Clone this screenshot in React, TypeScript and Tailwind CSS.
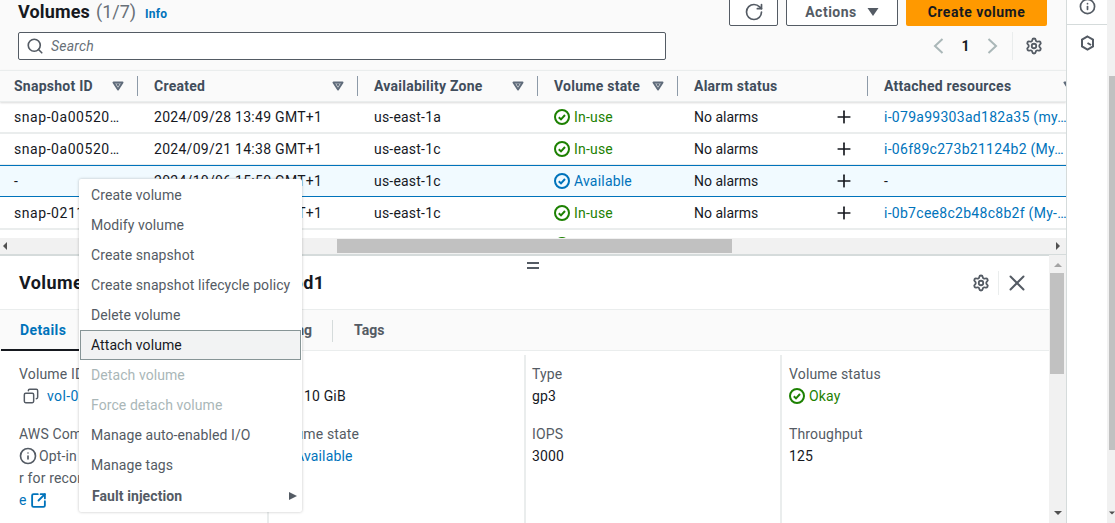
import React from "react";
import { RotateCw, Search, Settings, X, Plus, Copy, Info, SquareArrowOutUpRight } from "lucide-react";

const Tri = ({ c = "text-[#5f6b7a]" }: { c?: string }) => (
  <svg width="12" height="10" viewBox="0 0 12 10" className={`${c} shrink-0`}>
    <path d="M1.5 1.5h9L6 8.5z" fill="none" stroke="currentColor" strokeWidth="2" strokeLinejoin="round" />
    <path d="M4 2.5h4L6 6z" fill="currentColor" />
  </svg>
);

const Status = ({ color }: { color: string }) => (
  <svg width="16" height="16" viewBox="0 0 16 16" className={`${color} shrink-0`}>
    <circle cx="8" cy="8" r="7" fill="none" stroke="currentColor" strokeWidth="2" />
    <path d="M4.8 8.2l2.2 2.2 4-4.4" fill="none" stroke="currentColor" strokeWidth="2" />
  </svg>
);

const Chevron = ({ d }: { d: "l" | "r" }) => (
  <svg width="11" height="16" viewBox="0 0 11 16" className="text-[#aab7b8]">
    <path d={d === "l" ? "M9.5 1L2 8l7.5 7" : "M1.5 1L9 8l-7.5 7"} fill="none" stroke="currentColor" strokeWidth="2" />
  </svg>
);

const widths = ["w-[138px]", "w-[220px]", "w-[180px]", "w-[140px]", "w-[190px]", "w-[221px]"];

const Head = ({ label, w, filter = true, divider = true, first = false }: { label: string; w: string; filter?: boolean; divider?: boolean; first?: boolean }) => (
  <div className={`${w} shrink-0 h-full flex items-center justify-between relative pr-[14px] ${first ? "pl-[14px]" : "pl-[16px]"}`}>
    <span className="font-bold text-[#414d5c] whitespace-nowrap tracking-[0.25px]">{label}</span>
    {filter && <Tri />}
    {divider && <span className="absolute right-0 top-[5px] h-[20px] w-px bg-[#8d9aa8]" />}
  </div>
);

const rows = [
  { s: "snap-0a00520…", c: "2024/09/28 13:49 GMT+1", z: "us-east-1a", st: "In-use", r: "i-079a99303ad182a35 (my…" },
  { s: "snap-0a00520…", c: "2024/09/21 14:38 GMT+1", z: "us-east-1c", st: "In-use", r: "i-06f89c273b21124b2 (My…" },
  { s: "-", c: "2024/10/06 15:50 GMT+1", z: "us-east-1c", st: "Available", r: "-" },
  { s: "snap-0211a00e5…", c: "2024/09/14 10:12 GMT+1", z: "us-east-1c", st: "In-use", r: "i-0b7cee8c2b48c8b2f (My-…" },
];

const Row = ({ s, c, z, st, r }: { s: string; c: string; z: string; st: string; r: string }) => {
  const sel = st === "Available";
  return (
    <div className={`h-[32px] shrink-0 flex items-center whitespace-nowrap text-[#16191f] ${sel ? "bg-[#f1faff] border-y border-[#0073bb] -mt-px mb-px relative" : "border-b-2 border-[#eaeded]"}`}>
      <div className={`${widths[0]} shrink-0 pl-[14px] overflow-hidden tracking-[0.55px]`}>{s}</div>
      <div className={`${widths[1]} shrink-0 pl-[16px] tracking-[0.28px]`}>{c}</div>
      <div className={`${widths[2]} shrink-0 pl-[16px] tracking-[0.2px]`}>{z}</div>
      <div className={`${widths[3]} shrink-0 pl-[16px] flex items-center gap-[4px] tracking-[0.2px] ${sel ? "text-[#0073bb]" : "text-[#1d8102]"}`}>
        <Status color={sel ? "text-[#0073bb]" : "text-[#1d8102]"} />
        {st}
      </div>
      <div className={`${widths[4]} shrink-0 pl-[16px] flex items-center justify-between pr-[14px]`}>
        No alarms
        <Plus size={20} strokeWidth={2} className="text-[#16191f]" />
      </div>
      <div className={`flex-1 pl-[16px] overflow-hidden tracking-[0.28px] ${r === "-" ? "" : "text-[#0073bb]"}`}>{r}</div>
    </div>
  );
};

const menu = [
  "Create volume", "Modify volume", "Create snapshot", "Create snapshot lifecycle policy", "Delete volume",
  "Attach volume", "Detach volume", "Force detach volume", "Manage auto-enabled I/O", "Manage tags",
];

const Menu = () => (
  <div className="absolute left-[79px] top-[179px] w-[223px] h-[333px] bg-white rounded-[2px] shadow-[0_0_3px_rgba(0,0,0,0.25)] z-20 text-[#545b64] p-px tracking-[0.08px]">
    {menu.map((m) => {
      const hi = m === "Attach volume";
      const dis = m.startsWith("Detach") || m.startsWith("Force");
      return (
        <div key={m} className={`h-[30px] flex items-center whitespace-nowrap ${hi ? "bg-[#f2f3f3] border border-[#879596] text-[#16191f] pl-[10px]" : "pl-[11px]"} ${dis ? "text-[#aab7b8]" : ""}`}>
          {m}
        </div>
      );
    })}
    <div className="h-[30px] mt-px flex items-center justify-between pl-[12px] pr-[3px] font-bold">
      Fault injection
      <svg width="9" height="8" viewBox="0 0 9 8"><path d="M0 0l8 4-8 4z" fill="#545b64" /></svg>
    </div>
  </div>
);

const Field = ({ label, children }: { label: string; children: React.ReactNode }) => (
  <div className="mb-[16px]">
    <div className="text-[#545b64] h-[22px] leading-[22px] whitespace-nowrap">{label}</div>
    <div className="text-[#16191f] h-[22px] leading-[22px] flex items-center whitespace-nowrap">{children}</div>
  </div>
);

const ScrollBtn = ({ d, c = "#505050" }: { d: "l" | "r" | "u" | "d"; c?: string }) => {
  const p = { l: "M6 0L2 4l4 4z", r: "M2 0l4 4-4 4z", u: "M0 6l4-4 4 4z", d: "M0 2l4 4 4-4z" }[d];
  return <svg width="8" height="8" viewBox="0 0 8 8"><path d={p} fill={c} /></svg>;
};

export default function App() {
  return (
    <div className="relative w-[1115px] h-[523px] overflow-hidden bg-white flex text-[14px] font-['Roboto',sans-serif]">
      <div className="w-[1066px] shrink-0 flex flex-col h-full">
        {/* table section */}
        <div className="h-[255px] shrink-0 flex flex-col overflow-hidden">
          <div className="h-[70px] shrink-0 bg-[#fafafa] flex flex-col">
            <div className="h-[26px] flex items-start justify-between pl-[18px] pr-[19px]">
              <div className="flex items-baseline -mt-[2px] whitespace-nowrap">
                <span className="text-[18px] font-bold text-[#16191f] tracking-[0.15px]">Volumes</span>
                <span className="text-[18px] text-[#687078] ml-[6px]">(1/7)</span>
                <span className="text-[12px] font-bold text-[#0073bb] ml-[9px] tracking-[0.2px]">Info</span>
              </div>
              <div className="flex items-start gap-[8px] -mt-[8px]">
                <button className="w-[49px] h-[34px] pt-[6px] bg-white border border-[#545b64] rounded-[2px] flex items-center justify-center text-[#545b64]">
                  <RotateCw size={20} strokeWidth={2} />
                </button>
                <button className="w-[112px] h-[34px] pt-[6px] bg-white border border-[#545b64] rounded-[2px] flex items-center justify-center gap-[10px] font-bold text-[#545b64] tracking-[0.5px]">
                  Actions
                  <svg width="12" height="8" viewBox="0 0 12 8"><path d="M0.5 0h11L6 8z" fill="#545b64" /></svg>
                </button>
                <button className="w-[141px] h-[34px] pt-[6px] bg-[#ff9900] rounded-[2px] font-bold text-[#16191f] tracking-[0.5px]">Create volume</button>
              </div>
            </div>
            <div className="flex items-center justify-between pl-[18px] pr-[23px] mt-[6px]">
              <div className="w-[648px] h-[28px] bg-white border border-[#545b64] rounded-[2px] flex items-center pl-[7px] gap-[7px]">
                <Search size={18} strokeWidth={2.2} className="text-[#545b64]" />
                <span className="italic text-[#687078] tracking-[0.2px]">Search</span>
              </div>
              <div className="flex items-center h-[28px]">
                <Chevron d="l" />
                <span className="w-[43px] text-center font-bold text-[#16191f]">1</span>
                <Chevron d="r" />
                <span className="w-px h-[28px] bg-[#eaeded] ml-[14px] mr-[12px]" />
                <Settings size={18} strokeWidth={2.4} className="text-[#545b64]" />
              </div>
            </div>
          </div>
          <div className="h-[32px] shrink-0 bg-[#fafafa] border-y border-[#eaeded] flex items-center shadow-[0_1px_2px_rgba(0,0,0,0.15)] relative z-10 overflow-hidden">
            <Head label="Snapshot ID" w={widths[0]} first />
            <Head label="Created" w={widths[1]} />
            <Head label="Availability Zone" w={widths[2]} />
            <Head label="Volume state" w={widths[3]} />
            <Head label="Alarm status" w={widths[4]} filter={false} />
            <Head label="Attached resources" w={widths[5]} divider={false} />
          </div>
          <div className="flex-1 overflow-hidden flex flex-col min-h-0">
            {rows.map((r) => <Row key={r.c} {...r} />)}
            <div className="pl-[554px] pt-[7px]"><Status color="text-[#1d8102]" /></div>
          </div>
          <div className="h-[17px] shrink-0 bg-[#f1f1f1] flex items-center justify-between pl-[1px] pr-[4px] border-b border-[#d5dbdb] relative">
            <ScrollBtn d="l" />
            <div className="absolute left-[337px] w-[395px] top-0 h-[14px] mt-[1px] bg-[#c1c1c1]" />
            <ScrollBtn d="r" />
          </div>
        </div>
        {/* split panel */}
        <div className="flex-1 flex min-h-0">
          <div className="flex-1 flex flex-col min-w-0 relative border-t border-[#d5dbdb]">
            <div className="absolute left-[527px] top-[6px] w-[12px] h-[7px] border-y-2 border-[#545b64]" />
            <div className="h-[54px] shrink-0 border-b border-[#eaeded] flex items-center justify-between pl-[19px] pr-[19px]">
              <span className="text-[18px] font-bold text-[#16191f] whitespace-nowrap tracking-[0.4px]">Volume ID: vol-0a4b7c92e15f386d1</span>
              <div className="flex items-center">
                <Settings size={18} strokeWidth={2.4} className="text-[#545b64]" />
                <span className="w-px h-[24px] bg-[#eaeded] ml-[8px] mr-[5px]" />
                <X size={26} strokeWidth={1.8} className="text-[#545b64]" />
              </div>
            </div>
            <div className="h-[41px] shrink-0 pt-px bg-[#fafafa] border-b border-[#eaeded] flex items-center font-bold text-[#545b64] relative">
              <div className="w-[95px] pl-[20px] text-[#0073bb] tracking-[0.4px]">Details</div>
              <div className="absolute left-[1px] bottom-[-1px] w-[78px] h-[2px] bg-[#16191f]" />
              <div className="w-[237px] text-right pr-[20px]">Monitoring</div>
              <span className="w-px h-[22px] bg-[#d5dbdb]" />
              <div className="pl-[21px]">Tags</div>
            </div>
            <div className="flex-1 grid grid-cols-[267px_257px_256px_1fr] pt-[4px] min-h-0 tracking-[0.15px]">
              <div className="pl-[19px] pt-[8px] overflow-hidden whitespace-nowrap">
                <Field label="Volume ID">
                  <Copy size={16} strokeWidth={2.2} className="text-[#545b64] ml-[4px] mr-[8px] -scale-x-100" />
                  <span className="text-[#0073bb] tracking-[0.4px]">vol-0a4b7c92e15f386d1</span>
                </Field>
                <div className="text-[#545b64] h-[22px] leading-[22px]">AWS Compute Optimizer</div>
                <div className="text-[#545b64] h-[22px] leading-[22px] flex items-center gap-[2px]">
                  <Info size={18} strokeWidth={2.2} /> Opt-in to AWS
                </div>
                <div className="text-[#545b64] h-[22px] leading-[22px]">r for recommendations</div>
                <div className="text-[#0073bb] h-[22px] leading-[22px] flex items-center gap-[3px]">
                  e <SquareArrowOutUpRight size={17} strokeWidth={2.6} />
                </div>
              </div>
              <div className="border-l-2 border-[#eaeded] pl-[6px] pt-[8px] whitespace-nowrap">
                <Field label="Size"><span className="pl-[29px]">10 GiB</span></Field>
                <Field label="Volume state">
                  <span className="text-[#0073bb] flex items-center gap-[4px]"><Status color="text-[#0073bb]" />Available</span>
                </Field>
              </div>
              <div className="border-l-2 border-[#eaeded] pl-[6px] pt-[8px]">
                <Field label="Type">gp3</Field>
                <Field label="IOPS">3000</Field>
              </div>
              <div className="border-l-2 border-[#eaeded] pl-[7px] pt-[8px]">
                <Field label="Volume status">
                  <span className="text-[#1d8102] flex items-center gap-[4px]"><Status color="text-[#1d8102]" />Okay</span>
                </Field>
                <Field label="Throughput">125</Field>
              </div>
            </div>
          </div>
          <div className="w-[17px] shrink-0 bg-[#f1f1f1] flex flex-col items-center justify-between pt-[6px] pb-[6px] relative">
            <ScrollBtn d="u" c="#a3a3a3" />
            <div className="absolute left-[1px] top-[18px] w-[14px] h-[101px] bg-[#c1c1c1]" />
            <ScrollBtn d="d" />
          </div>
        </div>
      </div>
      {/* right rail */}
      <div className="w-[49px] shrink-0 flex border-l border-[#d5dbdb]">
        <div className="w-[40px] flex flex-col items-center text-[#545b64]">
          <div className="h-[25px] w-full border-b border-[#d5dbdb] flex items-start justify-center">
            <Info size={17} strokeWidth={2.4} className="-mt-[2px]" />
          </div>
          <svg width="15" height="16" viewBox="0 0 15 16" className="mt-[10px]">
            <path d="M7.5 1.5l5.5 3.2v6.6l-5.5 3.2L2 11.3V4.7z" fill="none" stroke="currentColor" strokeWidth="2" />
            <path d="M7.5 8l3.5 2" stroke="currentColor" strokeWidth="2" />
          </svg>
        </div>
        <div className="w-[8px] bg-[#f1f1f1] flex flex-col justify-end relative pb-[6px] overflow-hidden">
          <div className="absolute left-[2px] top-[76px] w-[6px] h-[374px] bg-[#c1c1c1]" />
          <div className="ml-[2px] w-[6px] overflow-hidden flex"><ScrollBtn d="d" /></div>
        </div>
      </div>
      <Menu />
    </div>
  );
}
